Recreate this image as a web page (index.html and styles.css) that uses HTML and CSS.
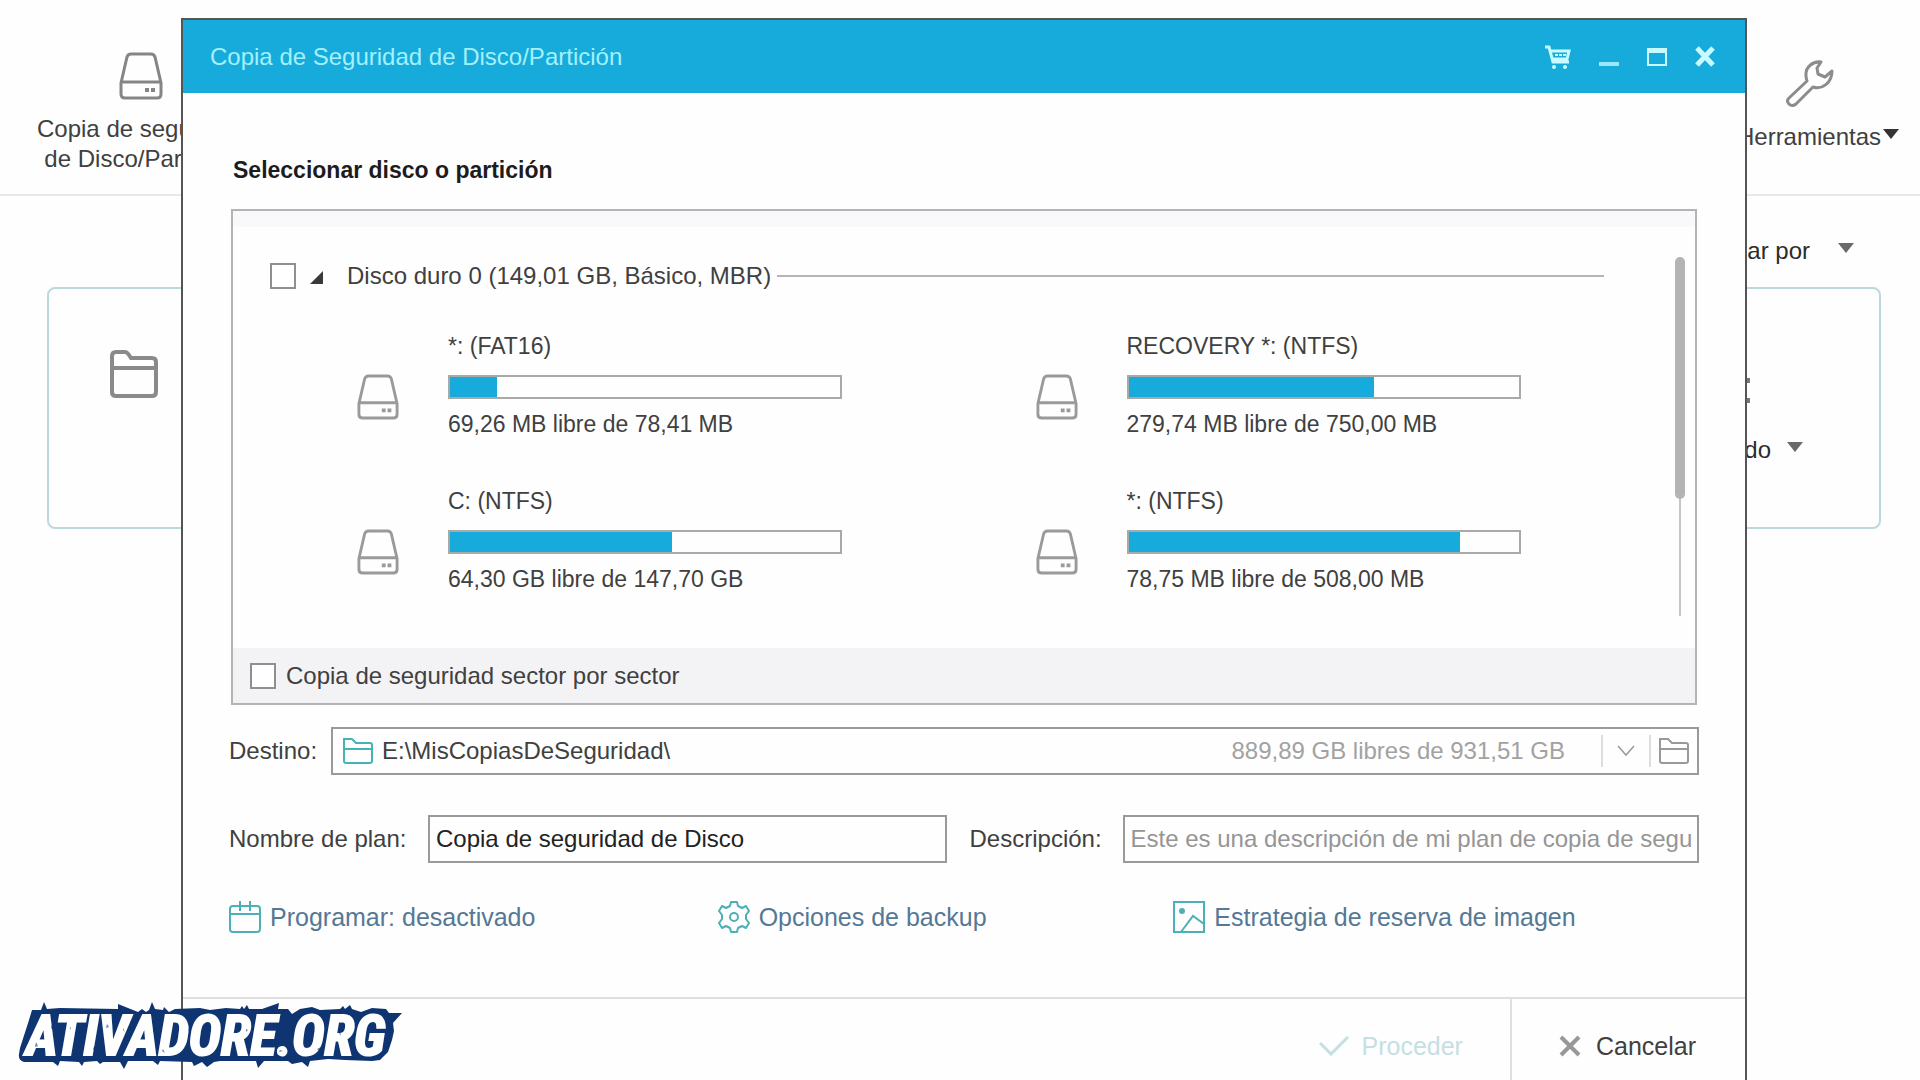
FILE: index.html
```html
<!DOCTYPE html>
<html lang="es">
<head>
<meta charset="utf-8">
<title>Copia de Seguridad de Disco/Partición</title>
<link rel="stylesheet" href="styles.css">
</head>
<body>
<svg class="defs" aria-hidden="true">
  <symbol id="i-disk" viewBox="0 0 44 48">
    <path d="M2 31 8 5q1-3 4-3h20q3 0 4 3l6 26v11q0 4-4 4H6q-4 0-4-4zM2 30h40" fill="none" stroke="currentColor" stroke-width="3"/>
    <path d="M26 36h4v4h-4zM32 36h4v4h-4z" fill="currentColor"/>
  </symbol>
  <symbol id="i-folder" viewBox="0 0 48 48">
    <path d="M2 6q0-4 4-4h9q2 0 4 3l2 3h21q4 0 4 4v30q0 4-4 4H6q-4 0-4-4zM2 18h44" fill="none" stroke="currentColor" stroke-width="4"/>
  </symbol>
  <symbol id="i-folder-thin" viewBox="0 0 30 26">
    <path d="M1 1h8l4 4h14q2 0 2 2v16q0 2-2 2H3q-2 0-2-2zM1 11h28" fill="none" stroke="currentColor" stroke-width="2"/>
  </symbol>
</svg>

<div class="app">
  <header class="toolbar">
    <button class="tool" type="button">
      <svg class="icon-disk icon-disk-dark"><use href="#i-disk"/></svg>
      <span>Copia de seguridad<br>de Disco/Partición</span>
    </button>
    <button class="tool tool-right" type="button">
      <svg class="icon-wrench" viewBox="0 0 48 48"><path d="M35 2C27 1 19 7 20 16q0 2 1 5L3 38q-3 3 0 6t7 0L27 27c9 3 19-4 19-16l-7 6-7-3-1-6z" fill="none" stroke="currentColor" stroke-width="3" stroke-linejoin="round"/></svg>
      <span class="caret-label">Herramientas<i class="caret caret-dark"></i></span>
    </button>
  </header>
  <div class="sort"><span>Ordenar por</span><i class="caret"></i></div>
  <section class="plan">
    <svg class="icon-folder"><use href="#i-folder"/></svg>
    <div class="plan-menu">
      <svg class="icon-dots" viewBox="0 0 24 30"><path d="M3 3h18v5H3zM3 23h18v5H3z" fill="currentColor"/></svg>
      <div class="plan-more"><span>Avanzado</span><i class="caret"></i></div>
    </div>
  </section>
</div>

<main class="dialog">
  <header class="titlebar">
    <h1>Copia de Seguridad de Disco/Partición</h1>
    <button type="button" aria-label="Tienda"><svg width="26" height="24" viewBox="0 0 26 24"><path d="M0 2h4l4 15h16M5 6h19l-2 8H7" fill="none" stroke="currentColor" stroke-width="3"/><path d="M10 10h11" stroke="currentColor" stroke-width="2" stroke-dasharray="3 1"/><circle cx="9" cy="22" r="2" fill="currentColor"/><circle cx="20" cy="22" r="2" fill="currentColor"/></svg></button>
    <button type="button" aria-label="Minimizar"><svg width="20" height="24" viewBox="0 0 20 24"><path d="M0 19h20" stroke="currentColor" stroke-width="4" opacity=".75"/></svg></button>
    <button type="button" aria-label="Maximizar"><svg width="20" height="24" viewBox="0 0 20 24"><path d="M1 4h18v16H1z" fill="none" stroke="currentColor" stroke-width="2"/><path d="M0 3h20v5H0z" fill="currentColor"/></svg></button>
    <button type="button" aria-label="Cerrar"><svg width="20" height="24" viewBox="0 0 20 24"><path d="M2 3l16 17M18 3 2 20" stroke="currentColor" stroke-width="5"/></svg></button>
  </header>

  <form class="body">
    <h2>Seleccionar disco o partición</h2>
    <section class="panel">
      <div class="tree">
        <div class="disk-row">
          <input type="checkbox" id="disk0">
          <svg class="twisty" viewBox="0 0 12 12"><path d="M12 0v12H0z" fill="currentColor"/></svg>
          <label for="disk0">Disco duro 0 (149,01 GB, Básico, MBR)</label>
          <hr>
        </div>
        <div class="partitions">
          <div class="part"><svg class="icon-disk"><use href="#i-disk"/></svg><div><p>*: (FAT16)</p><div class="bar"><span style="width:12%"></span></div><p>69,26 MB libre de 78,41 MB</p></div></div>
          <div class="part"><svg class="icon-disk"><use href="#i-disk"/></svg><div><p>RECOVERY *: (NTFS)</p><div class="bar"><span style="width:63%"></span></div><p>279,74 MB libre de 750,00 MB</p></div></div>
          <div class="part"><svg class="icon-disk"><use href="#i-disk"/></svg><div><p>C: (NTFS)</p><div class="bar"><span style="width:57%"></span></div><p>64,30 GB libre de 147,70 GB</p></div></div>
          <div class="part"><svg class="icon-disk"><use href="#i-disk"/></svg><div><p>*: (NTFS)</p><div class="bar"><span style="width:85%"></span></div><p>78,75 MB libre de 508,00 MB</p></div></div>
        </div>
        <div class="scroll"><i class="thumb"></i><i class="track"></i></div>
      </div>
      <div class="sector">
        <input type="checkbox" id="sector">
        <label for="sector">Copia de seguridad sector por sector</label>
      </div>
    </section>

    <div class="row">
      <label class="label-dest" for="dest">Destino:</label>
      <div class="combo">
        <svg class="icon-thin teal"><use href="#i-folder-thin"/></svg>
        <input type="text" id="dest" value="E:\MisCopiasDeSeguridad\">
        <span class="free">889,89 GB libres de 931,51 GB</span>
        <button type="button" aria-label="Desplegar"><svg width="18" height="12" viewBox="0 0 18 12"><path d="M1 1l8 9 8-9" fill="none" stroke="currentColor" stroke-width="1.5"/></svg></button>
        <button type="button" aria-label="Examinar"><svg class="icon-thin"><use href="#i-folder-thin"/></svg></button>
      </div>
    </div>

    <div class="row row-plan">
      <label class="label-plan" for="plan">Nombre de plan:</label>
      <input class="field field-plan" type="text" id="plan" value="Copia de seguridad de Disco">
      <label class="label-desc" for="desc">Descripción:</label>
      <input class="field field-desc" type="text" id="desc" placeholder="Este es una descripción de mi plan de copia de segu">
    </div>

    <nav class="links">
      <a href="#"><svg width="32" height="32" viewBox="0 0 32 32"><path d="M4 5h24q3 0 3 3v20q0 3-3 3H4q-3 0-3-3V8q0-3 3-3zM1 13h30M11 0v10M21 0v10" fill="none" stroke="currentColor" stroke-width="2"/></svg>Programar: desactivado</a>
      <a href="#"><svg width="32" height="32" viewBox="0 0 32 32"><path d="M13 1h6l1 4 4 2 4-2 3 5-3 4v4l3 4-3 5-4-2-4 2-1 4h-6l-1-4-4-2-4 2-3-5 3-4v-4l-3-4 3-5 4 2 4-2z" fill="none" stroke="currentColor" stroke-width="2" stroke-linejoin="round"/><circle cx="16" cy="16" r="4" fill="none" stroke="currentColor" stroke-width="2"/></svg>Opciones de backup</a>
      <a href="#"><svg width="32" height="32" viewBox="0 0 32 32"><path d="M1 1h30v30H1zM8 31l12-16 11 8" fill="none" stroke="currentColor" stroke-width="2"/><circle cx="9" cy="10" r="3" fill="currentColor"/></svg>Estrategia de reserva de imagen</a>
    </nav>
  </form>

  <footer class="actions">
    <button class="proceed" type="button" disabled><svg width="30" height="20" viewBox="0 0 30 20"><path d="M1 7l11 11L29 1" fill="none" stroke="currentColor" stroke-width="3"/></svg>Proceder</button>
    <button class="cancel" type="button"><svg width="22" height="22" viewBox="0 0 22 22"><path d="M2 2l18 18M20 2 2 20" stroke="currentColor" stroke-width="4"/></svg>Cancelar</button>
  </footer>
</main>

<svg class="brand" viewBox="0 0 410 80" role="img" aria-label="ATIVADORE.ORG">
  <path fill="#0e3572" d="M32 10L41 10 44 2 47 9 60 8 118 9 118 4 138 12 142 9 146 12 149 10 152 2 155 9 163 10 164 7 169 12 175 9 200 8 210 10 226 8 240 9 242 6 244 9 247 5 249 9 262 9 279 3 278 9 288 9 292 14 300 9 312 7 320 10 340 9 343 6 345 9 350 5 352 9 361 12 372 8 386 9 389 13 402 13 393 23 394 31 392 40 388 52 380 60 372 61 345 60 328 59 310 61 308 67 302 62 292 64 288 61 264 61 258 68 256 61 220 61 214 62 207 67 202 62 194 66 192 62 160 61 158 65 153 61 128 61 124 69 120 62 103 62 100 64 97 61 84 62 82 66 79 62 60 61 58 66 53 62 24 62Q18 60 19 54L20 48 29 20Z"/>
  <text class="brand-text" x="26" y="55">ATIVADORE.ORG</text>
  <path fill="#0e3572" opacity=".6" d="M36 42l2 4-3 1zM52 24l1 6-2-2zM70 27l1 1-1 2zM94 46l2 3-3 1zM96 52l3-3-1 4zM107 24l2 3-3 1zM123 28l2 4-2-2zM154 28l1 5-2-1zM163 49l2 4-3-2zM189 28l2 2-3 1zM219 42l3 3-3 1zM216 49l4-1-2 4zM246 29l2 1-2 2zM280 50l3 1-4 1zM322 43l3 2-2 2zM317 49l4-2-2 4zM340 31l1 5-2-3zM370 44l3-2-1 4z"/>
</svg>
</body>
</html>
```

FILE: styles.css
```css
* { box-sizing: border-box; }

body {
  margin: 0;
  background: #fefefe;
  color: #404040;
  font: 24px/30px "Liberation Sans", Arial, sans-serif;
  position: relative;
  min-height: 100vh;
  overflow: hidden;
}

button, input { font: inherit; color: inherit; }

button {
  border: 0;
  padding: 0;
  background: none;
  display: flex;
  align-items: center;
}

h1, h2, p { margin: 0; font-weight: normal; }
svg { display: block; flex: none; }
.defs { position: absolute; width: 0; height: 0; }

/* Main window */
.toolbar {
  display: flex;
  justify-content: space-between;
  height: 196px;
  padding: 52px 21px 0 37px;
  border-bottom: 2px solid #e9e9e9;
}

.tool {
  flex-direction: column;
  align-self: flex-start;
  gap: 14px;
}

.tool-right { padding-top: 8px; }
.icon-wrench { width: 48px; height: 48px; margin-right: 16px; color: #8c8c8c; }

.caret-label { display: flex; align-items: center; gap: 2px; }

.caret {
  border: 8px solid transparent;
  border-top: 10px solid #6a6a6a;
  border-bottom: 0;
  margin-bottom: 6px;
}

.caret-dark { border-top-color: #333; }

.icon-disk { width: 42px; height: 48px; color: #9a9a9a; }
.icon-disk-dark { width: 44px; color: #858585; }

.sort {
  display: flex;
  justify-content: flex-end;
  align-items: center;
  gap: 28px;
  padding: 40px 66px 20px 0;
  color: #2c2c2c;
}

.plan {
  display: flex;
  justify-content: space-between;
  margin: 1px 39px 0 47px;
  height: 242px;
  padding: 61px 76px 0 61px;
  border: 2px solid #bcd9dc;
  border-radius: 8px;
}

.icon-folder { width: 48px; height: 48px; color: #8a8a8a; }
.plan-menu { padding-top: 25px; color: #2c2c2c; }
.icon-dots { width: 24px; height: 30px; margin: 0 0 30px 64px; color: #777; }
.plan-more { display: flex; align-items: center; gap: 16px; }

/* Dialog window over the main window */
.dialog {
  position: absolute;
  top: 18px;
  left: 181px;
  right: 173px;
  bottom: 0;
  display: flex;
  flex-direction: column;
  background: #fefefe;
  border: 2px solid #555;
  border-bottom: 0;
}

.titlebar {
  display: flex;
  align-items: center;
  gap: 28px;
  height: 73px;
  padding: 0 30px 0 27px;
  background: #17abdb;
  color: #c8fbff;
}

.titlebar h1 { flex: 1; font-size: 24px; color: #a4f0fb; }

.body { padding: 62px 46px 0; flex: 1; }

h2 {
  margin: 0 4px 24px;
  font-size: 23px;
  line-height: 30px;
  font-weight: bold;
  color: #1c1c1c;
}

.panel {
  margin: 0 2px;
  border: 2px solid #b4b4b4;
}

.tree {
  position: relative;
  border-top: 16px solid #f9f9fc;
  padding: 34px 91px 0 37px;
  height: 437px;
}

input[type="checkbox"] {
  appearance: none;
  flex: none;
  width: 26px;
  height: 26px;
  margin: 0;
  border: 2px solid #8f8f8f;
  background: #fff;
}

.disk-row { display: flex; align-items: center; }
.twisty { width: 13px; height: 13px; margin: 2px 24px 0 14px; color: #3a3a3a; }
.disk-row hr { flex: 1; margin: 0 0 0 6px; border: 0; border-top: 2px solid #b5b5b5; }

.partitions {
  display: grid;
  grid-template-columns: 1fr 1fr;
  column-gap: 20px;
  row-gap: 47px;
  padding: 40px 0 0 87px;
  margin-right: -90px;
  font-size: 23px;
}

.part { display: flex; align-items: center; gap: 49px; }
.part .icon-disk { margin-top: 24px; }
.part > div { flex: 0 1 394px; }

.bar {
  height: 24px;
  margin: 14px 0 10px;
  border: 2px solid #a9a9a9;
  background: #fefefe;
}

.bar span { display: block; height: 100%; background: #17abdb; }

.scroll {
  position: absolute;
  top: 30px;
  right: 10px;
  bottom: 32px;
  width: 10px;
  display: flex;
  flex-direction: column;
  align-items: center;
}

.thumb { width: 10px; flex: 0 0 242px; border-radius: 5px; background: #b4b4b4; }
.track { width: 2px; flex: 1; background: #c6c6c6; }

.sector {
  display: flex;
  align-items: center;
  gap: 10px;
  height: 55px;
  padding-left: 17px;
  background: #f3f3f6;
}

.row {
  display: flex;
  align-items: center;
  margin-top: 22px;
}

.row-plan { margin-top: 40px; }
.label-dest { flex: 0 0 102px; }
.label-plan { flex: 0 0 199px; }
.label-desc { flex: 0 0 153px; }
.field-plan { flex: 518 1 0; margin-right: 23px; }
.field-desc { flex: 577 1 0; }

.combo, .field {
  height: 48px;
  min-width: 0;
  border: 2px solid #9a9a9a;
  background: #fefefe;
}

.field { padding: 0 0 0 6px; color: #222; }
.field::placeholder { color: #959595; opacity: 1; }

.combo { flex: 1; display: flex; align-items: center; padding-left: 10px; }
.combo input { flex: 1; min-width: 0; border: 0; padding: 0; margin-left: 9px; background: none; }
.free { color: #a2a2a2; margin-right: 36px; }

.combo button {
  width: 48px;
  height: 32px;
  justify-content: center;
  border-left: 2px solid #dedede;
  color: #999;
}

.icon-thin { width: 30px; height: 26px; }
.teal { color: #45b3b6; }

.links {
  display: grid;
  grid-template-columns: 489fr 456fr 526fr;
  margin-top: 38px;
  font-size: 25px;
}

.links a {
  display: flex;
  align-items: center;
  gap: 9px;
  color: #557894;
  text-decoration: none;
}

.links svg { color: #4cb0b8; }

.actions {
  display: flex;
  justify-content: flex-end;
  height: 83px;
  border-top: 2px solid #dfdfdf;
  font-size: 25px;
}

.actions button { padding-top: 12px; }
.proceed { gap: 12px; padding-right: 47px; color: #c5dfe2; }
.actions .cancel { gap: 15px; padding: 12px 49px 0 47px; border-left: 2px solid #dfdfdf; }
.cancel svg { color: #989898; }

/* Site mark laid over the corner */
.brand { position: absolute; left: 0; bottom: 0; width: 410px; height: 80px; }

.brand-text {
  font: italic bold 55px "Liberation Sans Narrow", "Roboto Condensed", "Liberation Sans", sans-serif;
  fill: #fff;
  stroke: #fff;
  stroke-width: 2px;
}
```
